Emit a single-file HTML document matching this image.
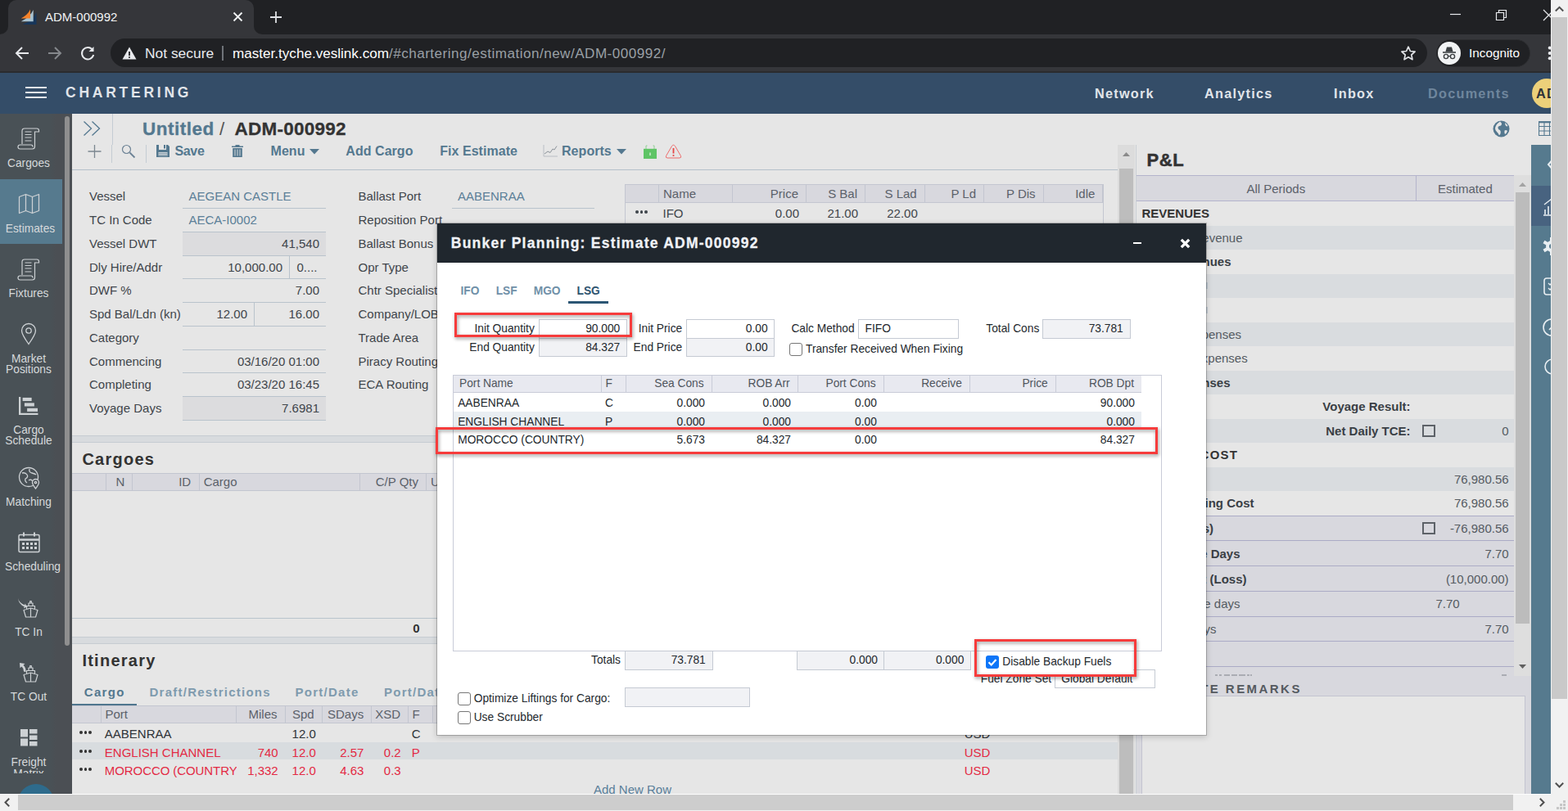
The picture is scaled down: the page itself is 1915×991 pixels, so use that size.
<!DOCTYPE html>
<html lang="en"><head><meta charset="utf-8"><title>ADM-000992</title>
<style>
html,body{margin:0;padding:0}
body{width:1915px;height:991px;overflow:hidden;position:relative;background:#e6e6e6;font-family:"Liberation Sans",sans-serif;}
body div,body svg{position:absolute}
.t{white-space:nowrap}
</style></head><body>
<div style="left:0px;top:0px;width:1894px;height:42px;background:#202124;"></div>
<div style="left:10px;top:0;width:300px;height:42px;background:#35363a;border-radius:10px 10px 0 0"></div>
<div style="left:0;top:32px;width:10px;height:10px;background:#35363a"></div><div style="left:0;top:22px;width:10px;height:20px;background:#202124;border-radius:0 0 10px 0"></div>
<div style="left:310px;top:32px;width:10px;height:10px;background:#35363a"></div><div style="left:310px;top:22px;width:10px;height:20px;background:#202124;border-radius:0 0 0 10px"></div>
<svg style="left:25px;top:11px;" width="20" height="20" viewBox="0 0 20 20"><path d="M2.500 19h17v-15q-4 10-17 15z" fill="#17365a"/><path d="M0.700 15.300h15v-14.300q-4 9-15 14.300z" fill="#a9c2cf"/><path d="M0.700 11.500h11.300v-11q-3 6.500-11.300 11z" fill="#f5822a"/></svg>
<div class="t" style="top:12px;font-size:15px;line-height:18px;color:#f1f3f4;left:55px;">ADM-000992</div>
<svg style="left:284px;top:14px;" width="13" height="13" viewBox="0 0 13 13"><path d="M1.5 1.5l10 10M11.5 1.5l-10 10" stroke="#f1f3f4" stroke-width="1.8" fill="none"/></svg>
<svg style="left:329px;top:13px;" width="16" height="16" viewBox="0 0 16 16"><path d="M8 1v14M1 8h14" stroke="#dfe1e5" stroke-width="1.8" fill="none"/></svg>
<svg style="left:1771px;top:16px;" width="14" height="3" viewBox="0 0 14 3"><path d="M0 1.5h13" stroke="#e8eaed" stroke-width="1.2"/></svg>
<svg style="left:1826px;top:11px;" width="15" height="15" viewBox="0 0 15 15"><path d="M1.5 4.5h9v9h-9zM4.5 4.5v-3h9v9h-3" stroke="#e8eaed" stroke-width="1.2" fill="none"/></svg>
<svg style="left:1884px;top:11px;" width="15" height="15" viewBox="0 0 15 15"><path d="M1 1l13 13M14 1L1 14" stroke="#e8eaed" stroke-width="1.2" fill="none"/></svg>
<div style="left:0px;top:42px;width:1894px;height:46px;background:#35363a;"></div>
<div style="left:0px;top:87px;width:1894px;height:2px;background:#2a2b2e;"></div>
<svg style="left:17px;top:55px;" width="20" height="20" viewBox="0 0 20 20"><path d="M18 10H3.5M10 3l-7 7 7 7" stroke="#e8eaed" stroke-width="2" fill="none"/></svg>
<svg style="left:57px;top:55px;" width="20" height="20" viewBox="0 0 20 20"><path d="M2 10h14.5M10 3l7 7-7 7" stroke="#85888c" stroke-width="2" fill="none"/></svg>
<svg style="left:97px;top:55px;" width="20" height="20" viewBox="0 0 20 20"><path d="M16.2 6.2A7.2 7.2 0 1 0 17.2 12" stroke="#e8eaed" stroke-width="2" fill="none"/><path d="M17.5 2v6h-6z" fill="#e8eaed"/></svg>
<div style="left:135px;top:47px;width:1608px;height:35px;background:#202124;border-radius:18px"></div>
<svg style="left:149px;top:56px;" width="18" height="18" viewBox="0 0 18 18"><path d="M9 1.5L17.5 16.5h-17z" fill="#e8eaed"/><path d="M9 7v5" stroke="#202124" stroke-width="1.8"/><circle cx="9" cy="14" r="1" fill="#202124"/></svg>
<div class="t" style="top:55px;font-size:17.4px;line-height:21px;color:#e8eaed;left:177px;">Not secure</div>
<div style="left:271px;top:56px;width:2px;height:18px;background:#6f7378;"></div>
<div class="t" style="top:55px;font-size:17.1px;line-height:21px;color:#9aa0a6;left:284px;"><span style="color:#fff">master.tyche.veslink.com</span><span style="letter-spacing:.48px">/#chartering/estimation/new/ADM-000992/</span></div>
<svg style="left:1710px;top:55px;" width="20" height="20" viewBox="0 0 20 20"><path d="M10 2.2l2.4 5.3 5.7.6-4.3 3.9 1.2 5.7-5-2.9-5 2.9 1.2-5.7-4.3-3.9 5.7-.6z" stroke="#dfe1e5" stroke-width="1.7" fill="none" stroke-linejoin="round"/></svg>
<div style="left:1754px;top:48px;width:115px;height:34px;background:#202124;border-radius:17px;box-sizing:border-box;border:1px solid #2c2d30"></div>
<div style="left:1756px;top:51px;width:28px;height:28px;background:#f1f3f4;border-radius:14px"></div>
<svg style="left:1760px;top:56px;" width="20" height="18" viewBox="0 0 20 18"><path d="M5.5 7L7 1.5h6L14.5 7z" fill="#3c4043"/><path d="M2 8h16" stroke="#3c4043" stroke-width="1.6"/><circle cx="6" cy="13" r="2.6" stroke="#3c4043" stroke-width="1.4" fill="none"/><circle cx="14" cy="13" r="2.6" stroke="#3c4043" stroke-width="1.4" fill="none"/><path d="M8.6 12.6h2.8" stroke="#3c4043" stroke-width="1.2"/></svg>
<div class="t" style="top:56px;font-size:15.3px;line-height:18px;color:#fff;left:1794px;">Incognito</div>
<svg style="left:1888px;top:55px;" width="6" height="20" viewBox="0 0 6 20"><circle cx="4.700" cy="3.600" r="2" fill="#e8eaed"/><circle cx="4.700" cy="9.900" r="2" fill="#e8eaed"/><circle cx="4.700" cy="16.200" r="2" fill="#e8eaed"/></svg>
<div style="left:0px;top:89px;width:1894px;height:50px;background:#344d68;"></div>
<div style="left:31px;top:106px;width:26px;height:2px;background:#e4e8ec;"></div>
<div style="left:31px;top:112px;width:26px;height:2px;background:#e4e8ec;"></div>
<div style="left:31px;top:118px;width:26px;height:2px;background:#e4e8ec;"></div>
<div class="t" style="top:103px;font-size:17.5px;line-height:21px;color:#e1e5ea;font-weight:700;letter-spacing:3.75px;left:80px;">CHARTERING</div>
<div class="t" style="top:104px;font-size:16.25px;line-height:20px;color:#e1e5ea;font-weight:700;letter-spacing:1.25px;left:1337px;">Network</div>
<div class="t" style="top:104px;font-size:16.25px;line-height:20px;color:#e1e5ea;font-weight:700;letter-spacing:1.25px;left:1471px;">Analytics</div>
<div class="t" style="top:104px;font-size:16.25px;line-height:20px;color:#e1e5ea;font-weight:700;letter-spacing:1.25px;left:1629px;">Inbox</div>
<div class="t" style="top:104px;font-size:16.25px;line-height:20px;color:#6f869d;font-weight:700;letter-spacing:1.25px;left:1744px;">Documents</div>
<div style="left:1871px;top:96px;width:36px;height:36px;background:#ecd07a;border-radius:18px"></div>
<div class="t" style="top:104px;font-size:16.25px;line-height:20px;color:#2f3338;font-weight:700;letter-spacing:1.25px;left:1876px;">AD</div>
<div style="left:0px;top:139px;width:1894px;height:831px;background:#e6e6e6;"></div>
<div style="left:0px;top:139px;width:88px;height:831px;background:linear-gradient(90deg,#495156 0,#495156 62px,#4b4f54 68px);"></div>
<div style="left:0px;top:219px;width:76px;height:79px;background:#567a8e;"></div>
<div style="left:79px;top:142px;width:6px;height:647px;background:#8f8f8f;border-radius:3px"></div>
<svg style="left:21px;top:156px;" width="28" height="28" viewBox="0 0 28 28"><g fill="none" stroke="#cdd1d4" stroke-width="1.2"><path d="M6 20V4q0-3 3-3h15q2.5 0 2.500 2.500v1.500h-5v18q0 3-3 3h-15q-2.500 0-2.500-2.500 0-2.500 2.500-2.500h13.500q2 0 2 2.500"/><path d="M9.500 5h8M9.500 8.500h8M9.500 12h8M9.500 16h8" stroke-width="1"/></g></svg>
<div class="t" style="top:192px;font-size:13.75px;line-height:16px;color:#d6d9db;left:-465px;width:1000px;text-align:center;">Cargoes</div>
<svg style="left:22px;top:236px;" width="28" height="26" viewBox="0 0 28 26"><g fill="none" stroke="#cdd1d4" stroke-width="1.25" stroke-linejoin="round"><path d="M1.500 4.500l8-3 8 3 8-3v20l-8 3-8-3-8 3zM9.500 1.500v20M17.500 4.500v20"/></g></svg>
<div class="t" style="top:272px;font-size:13.75px;line-height:16px;color:#d6d9db;left:-463px;width:1000px;text-align:center;">Estimates</div>
<svg style="left:21px;top:316px;" width="28" height="28" viewBox="0 0 28 28"><g fill="none" stroke="#cdd1d4" stroke-width="1.2"><path d="M6 20V4q0-3 3-3h15q2.5 0 2.500 2.500v1.500h-5v18q0 3-3 3h-15q-2.500 0-2.500-2.500 0-2.500 2.500-2.500h13.500q2 0 2 2.500"/><path d="M9.500 5h8M9.500 8.500h8M9.500 12h8M9.500 16h8" stroke-width="1"/></g></svg>
<div class="t" style="top:351px;font-size:13.75px;line-height:16px;color:#d6d9db;left:-465px;width:1000px;text-align:center;">Fixtures</div>
<svg style="left:25px;top:394px;" width="20" height="28" viewBox="0 0 20 28"><g fill="none" stroke="#cdd1d4" stroke-width="1.3"><path d="M10 26.500C4 18 1.500 14 1.500 10a8.500 8.500 0 0 1 17 0c0 4-2.500 8-8.500 16.500z"/><circle cx="10" cy="10" r="3.200"/></g></svg>
<div class="t" style="top:431px;font-size:13.75px;line-height:16px;color:#d6d9db;left:-465px;width:1000px;text-align:center;">Market</div>
<div class="t" style="top:444px;font-size:13.75px;line-height:16px;color:#d6d9db;left:-465px;width:1000px;text-align:center;">Positions</div>
<svg style="left:23px;top:485px;" width="24" height="22" viewBox="0 0 24 22"><g fill="#cdd1d4" transform="scale(.92)"><path d="M0 0h2.500v21.500h23v2.500h-25.500z"/><rect x="5" y="1" width="12" height="4.500"/><rect x="7.500" y="8" width="13" height="4.500"/><rect x="11" y="15" width="14" height="4.500"/></g></svg>
<div class="t" style="top:518px;font-size:13.75px;line-height:16px;color:#d6d9db;left:-465px;width:1000px;text-align:center;">Cargo</div>
<div class="t" style="top:531px;font-size:13.75px;line-height:16px;color:#d6d9db;left:-465px;width:1000px;text-align:center;">Schedule</div>
<svg style="left:22px;top:570px;" width="28" height="28" viewBox="0 0 28 28"><g fill="none" stroke="#cdd1d4" stroke-width="1.300"><circle cx="13" cy="13" r="11.500"/><path d="M5 8q4-1 6 2t-2 5q-1 3 2 5M14 3q-1 4 3 5t5 2M13 17q3-2 5 1"/><path d="M21.500 27q-4-5-4-7.500a4 4 0 0 1 8 0q0 2.500-4 7.500z" fill="#4b5156"/><circle cx="21.500" cy="19.500" r="1.200"/></g></svg>
<div class="t" style="top:606px;font-size:13.75px;line-height:16px;color:#d6d9db;left:-465px;width:1000px;text-align:center;">Matching</div>
<svg style="left:22px;top:650px;" width="28" height="26" viewBox="0 0 28 26"><g fill="none" stroke="#cdd1d4" stroke-width="1.500"><rect x="1" y="3.500" width="25" height="21" rx="1.500"/><path d="M1 9.500h25" stroke-width="2.500"/><path d="M7 0.500v5M20 0.500v5" stroke-width="2"/></g><g fill="#cdd1d4"><rect x="5" y="13" width="3" height="3"/><rect x="10" y="13" width="3" height="3"/><rect x="15" y="13" width="3" height="3"/><rect x="20" y="13" width="3" height="3"/><rect x="5" y="18" width="3" height="3"/><rect x="10" y="18" width="3" height="3"/><rect x="15" y="18" width="3" height="3"/><rect x="20" y="18" width="3" height="3"/></g></svg>
<div class="t" style="top:685px;font-size:13.75px;line-height:16px;color:#d6d9db;left:-460px;width:1000px;text-align:center;">Scheduling</div>
<svg style="left:21px;top:730px;" width="28" height="28" viewBox="0 0 28 28"><g fill="none" stroke="#cdd1d4" stroke-width="1.200" stroke-linejoin="round"><path d="M1 1q1.500 6 8.500 8.500l-.3-2 3.500 3.800-4.800 2 .8-2q-6.500-2.500-7.700-10.300z" fill="#cdd1d4" stroke="none"/><path d="M8 15.500l8.500-2.500 8.500 2.500-2.500 8.500h-12zM16.500 13v11M11.500 14.500v-4h10v4M14 10.500v-3.500h5v3.500M15.700 7v-2.500h1.600v2.500"/></g></svg>
<div class="t" style="top:765px;font-size:13.75px;line-height:16px;color:#d6d9db;left:-465px;width:1000px;text-align:center;">TC In</div>
<svg style="left:21px;top:809px;" width="28" height="28" viewBox="0 0 28 28"><g fill="none" stroke="#cdd1d4" stroke-width="1.200" stroke-linejoin="round"><path d="M3 1l6.500 1-2 1.800q3.500 3.500 3 8.500l-2.500-.8q.3-3.500-2.500-6l-2 1.800z" fill="#cdd1d4" stroke="none"/><path d="M8 15.500l8.500-2.500 8.500 2.500-2.500 8.500h-12zM16.500 13v11M11.500 14.500v-4h10v4M14 10.500v-3.500h5v3.500M15.700 7v-2.500h1.600v2.500"/></g></svg>
<div class="t" style="top:844px;font-size:13.75px;line-height:16px;color:#d6d9db;left:-465px;width:1000px;text-align:center;">TC Out</div>
<svg style="left:25px;top:891px;" width="21" height="21" viewBox="0 0 21 21"><g fill="#cdd1d4"><rect x="0" y="0" width="9" height="9.500"/><rect x="0" y="11.500" width="9" height="9"/><rect x="11" y="0" width="9.500" height="5.500"/><rect x="11" y="7.500" width="9.500" height="5.500"/><rect x="11" y="15" width="9.500" height="5.500"/></g></svg>
<div class="t" style="top:924px;font-size:13.75px;line-height:16px;color:#d6d9db;left:-465px;width:1000px;text-align:center;">Freight</div>
<div style="left:0;top:938px;width:76px;height:7px;overflow:hidden"><div class="t" style="left:0;width:70px;text-align:center;top:0px;font-size:13.75px;line-height:16px;color:#d6d9db">Matrix</div></div>
<div style="left:0;top:950px;width:88px;height:20px;overflow:hidden"><div style="left:22px;top:8px;width:44px;height:44px;border-radius:22px;background:#2e6b8c"></div></div>
<svg style="left:101px;top:147px;" width="23" height="20" viewBox="0 0 23 20"><path d="M1.500 1.500l9 8.500-9 8.500M11.500 1.500l9 8.500-9 8.500" stroke="#54788f" stroke-width="1.300" fill="none"/></svg>
<div style="left:137px;top:139px;width:1px;height:38px;background:#c5ccd3;"></div>
<div class="t" style="top:144px;font-size:22.5px;line-height:27px;color:#54788f;font-weight:700;letter-spacing:0.5px;left:174px;-webkit-text-stroke:.3px #54788f;">Untitled</div>
<div class="t" style="top:144px;font-size:22.5px;line-height:27px;color:#555;left:268px;">/</div>
<div class="t" style="top:144px;font-size:22.5px;line-height:27px;color:#333;font-weight:700;letter-spacing:0.25px;left:286.5px;-webkit-text-stroke:.3px #333;">ADM-000992</div>
<svg style="left:107px;top:177px;" width="17" height="16" viewBox="0 0 17 16"><path d="M8.500 0v16M0.500 8h16" stroke="#7b8790" stroke-width="1.300" fill="none"/></svg>
<div style="left:136px;top:177px;width:1px;height:22px;background:#c5ccd3;"></div>
<div style="left:178px;top:177px;width:1px;height:22px;background:#c5ccd3;"></div>
<svg style="left:148px;top:176px;" width="18" height="18" viewBox="0 0 18 18"><circle cx="6.500" cy="6.500" r="5" stroke="#6c8295" stroke-width="1.200" fill="none"/><path d="M10.500 10.500l6 6" stroke="#6c8295" stroke-width="1.800"/></svg>
<svg style="left:191px;top:177px;" width="16" height="15" viewBox="0 0 16 15"><path d="M0 0h3v6h9v-6h2l2 2v13h-16z" fill="#54788f"/><rect x="9" y="0" width="2" height="4.500" fill="#54788f"/><rect x="2.500" y="9" width="11" height="4.500" fill="#d0d6db"/><path d="M2.500 10.500h11M2.500 12.500h11" stroke="#54788f" stroke-width=".6"/></svg>
<div class="t" style="top:175px;font-size:16px;line-height:19px;color:#54788f;font-weight:700;letter-spacing:-0.35px;left:213.5px;">Save</div>
<svg style="left:283px;top:177px;" width="14" height="15" viewBox="0 0 14 15"><path d="M0 1.500h14v1.500h-14zM4.500 0h5v1.500h-5z" fill="#54788f"/><path d="M1.200 4h11.600v11h-11.600z" fill="#54788f"/><path d="M4 5.500v8M7 5.500v8M10 5.500v8" stroke="#e6e6e6" stroke-width=".9"/></svg>
<div class="t" style="top:175px;font-size:16px;line-height:19px;color:#54788f;font-weight:700;letter-spacing:0.05px;left:330.5px;">Menu</div>
<svg style="left:378px;top:182px;" width="12" height="7" viewBox="0 0 12 7"><path d="M0 0h12l-6 6.500z" fill="#54788f"/></svg>
<div class="t" style="top:175px;font-size:16px;line-height:19px;color:#54788f;font-weight:700;letter-spacing:0.05px;left:422.3px;">Add Cargo</div>
<div class="t" style="top:175px;font-size:16px;line-height:19px;color:#54788f;font-weight:700;letter-spacing:0.05px;left:537.2px;">Fix Estimate</div>
<svg style="left:663px;top:177px;" width="18" height="15" viewBox="0 0 18 15"><path d="M1 0v14h17" stroke="#b9bec4" stroke-width="1" fill="none"/><path d="M2 11l4-3 3 1.500 3-4.500 2 1 3-4.500" stroke="#8b9299" stroke-width="1" fill="none"/></svg>
<div class="t" style="top:175px;font-size:16px;line-height:19px;color:#54788f;font-weight:700;letter-spacing:0.05px;left:686px;">Reports</div>
<svg style="left:753px;top:182px;" width="12" height="7" viewBox="0 0 12 7"><path d="M0 0h12l-6 6.500z" fill="#54788f"/></svg>
<svg style="left:786px;top:177px;" width="16" height="17" viewBox="0 0 16 17"><path d="M3 5V1M13 5V1M3 1h1.500M11.500 1H13" stroke="#8ed093" stroke-width="1" fill="none"/><rect x="0" y="4.800" width="16" height="12.200" fill="#5fc466"/><rect x="7.300" y="9.500" width="1.400" height="3.500" fill="#d8f0da"/></svg>
<svg style="left:812px;top:176px;" width="21" height="18" viewBox="0 0 21 18"><path d="M10.500 1.200q1.200 0 1.900 1.200l7 12q1.200 2.400-1.500 2.600h-14.800q-2.700-.2-1.500-2.600l7-12q.7-1.200 1.900-1.200z" stroke="#ee6a6a" stroke-width="1" fill="none"/><path d="M10.500 5v6.500" stroke="#e54848" stroke-width="1.800"/><circle cx="10.500" cy="14" r="1.100" fill="#e54848"/></svg>
<div style="left:88px;top:207px;width:1277px;height:1px;background:#b4c0ca;"></div>
<svg style="left:1823px;top:147px;" width="21" height="21" viewBox="0 0 21 21"><circle cx="10.500" cy="10.500" r="10" fill="#54788f"/><path d="M9 1.500q2.500 1.500 2 3.500t-3 2q-2 .5-1.500 2.500t2.500 2.500q1.500 2 .5 4.500l-1.500 2q-1-3-3-4.500t-2-4.500q1-5 6-8zM15 3q2.500 1.500 3.500 4l-1.500 .5q-2-1-2-4.500zM14.500 12.500q2-1 3.500 .5-1 3-3 4-1-2-.5-4.500z" fill="#e6e6e6"/></svg>
<svg style="left:1879px;top:148px;" width="16" height="18" viewBox="0 0 16 18"><path d="M0.500 1h19v16.500h-19zM0.500 6.500h19M0.500 12h19M7 1v16M13.500 1v16" stroke="#54788f" stroke-width="1.100" fill="none"/><path d="M0 1.200h20" stroke="#54788f" stroke-width="2.200"/></svg>
<div class="t" style="top:231px;font-size:15px;line-height:18px;color:#3f454b;left:109px;">Vessel</div>
<div style="left:223px;top:254px;width:175px;height:1px;background:#b9c3cc;"></div>
<div class="t" style="top:260px;font-size:15px;line-height:18px;color:#3f454b;left:109px;">TC In Code</div>
<div style="left:223px;top:283px;width:175px;height:1px;background:#b9c3cc;"></div>
<div style="left:223px;top:284px;width:175px;height:28px;background:#dcdcde;"></div>
<div class="t" style="top:289px;font-size:15px;line-height:18px;color:#3f454b;left:109px;">Vessel DWT</div>
<div style="left:223px;top:312px;width:175px;height:1px;background:#b9c3cc;"></div>
<div class="t" style="top:318px;font-size:15px;line-height:18px;color:#3f454b;left:109px;">Dly Hire/Addr</div>
<div style="left:223px;top:340px;width:175px;height:1px;background:#b9c3cc;"></div>
<div class="t" style="top:346px;font-size:15px;line-height:18px;color:#3f454b;left:109px;">DWF %</div>
<div style="left:223px;top:369px;width:175px;height:1px;background:#b9c3cc;"></div>
<div class="t" style="top:375px;font-size:15px;line-height:18px;color:#3f454b;left:109px;">Spd Bal/Ldn (kn)</div>
<div style="left:223px;top:398px;width:175px;height:1px;background:#b9c3cc;"></div>
<div class="t" style="top:404px;font-size:15px;line-height:18px;color:#3f454b;left:109px;">Category</div>
<div style="left:223px;top:427px;width:175px;height:1px;background:#b9c3cc;"></div>
<div class="t" style="top:433px;font-size:15px;line-height:18px;color:#3f454b;left:109px;">Commencing</div>
<div style="left:223px;top:455px;width:175px;height:1px;background:#b9c3cc;"></div>
<div class="t" style="top:461px;font-size:15px;line-height:18px;color:#3f454b;left:109px;">Completing</div>
<div style="left:223px;top:484px;width:175px;height:1px;background:#b9c3cc;"></div>
<div style="left:223px;top:485px;width:175px;height:28px;background:#dcdcde;"></div>
<div class="t" style="top:490px;font-size:15px;line-height:18px;color:#3f454b;left:109px;">Voyage Days</div>
<div style="left:223px;top:513px;width:175px;height:1px;background:#b9c3cc;"></div>
<div class="t" style="top:231px;font-size:15px;line-height:18px;color:#5b7f98;left:230.5px;">AEGEAN CASTLE</div>
<div class="t" style="top:260px;font-size:15px;line-height:18px;color:#5b7f98;left:230.5px;">AECA-I0002</div>
<div class="t" style="top:289px;font-size:15px;line-height:18px;color:#3f454b;right:1525px;">41,540</div>
<div class="t" style="top:318px;font-size:15px;line-height:18px;color:#3f454b;right:1570px;">10,000.00</div>
<div class="t" style="top:318px;font-size:15px;line-height:18px;color:#3f454b;left:362.5px;">0....</div>
<div class="t" style="top:346px;font-size:15px;line-height:18px;color:#3f454b;right:1525px;">7.00</div>
<div class="t" style="top:375px;font-size:15px;line-height:18px;color:#3f454b;right:1613px;">12.00</div>
<div class="t" style="top:375px;font-size:15px;line-height:18px;color:#3f454b;right:1525px;">16.00</div>
<div class="t" style="top:433px;font-size:15px;line-height:18px;color:#3f454b;right:1525px;">03/16/20 01:00</div>
<div class="t" style="top:461px;font-size:15px;line-height:18px;color:#3f454b;right:1525px;">03/23/20 16:45</div>
<div class="t" style="top:490px;font-size:15px;line-height:18px;color:#3f454b;right:1525px;">7.6981</div>
<div style="left:353px;top:313px;width:1px;height:27px;background:#b9c3cc;"></div>
<div style="left:310px;top:370px;width:1px;height:28px;background:#b9c3cc;"></div>
<div class="t" style="top:231px;font-size:15px;line-height:18px;color:#3f454b;left:437.5px;">Ballast Port</div>
<div class="t" style="top:260px;font-size:15px;line-height:18px;color:#3f454b;left:437.5px;">Reposition Port</div>
<div class="t" style="top:289px;font-size:15px;line-height:18px;color:#3f454b;left:437.5px;">Ballast Bonus</div>
<div class="t" style="top:318px;font-size:15px;line-height:18px;color:#3f454b;left:437.5px;">Opr Type</div>
<div class="t" style="top:346px;font-size:15px;line-height:18px;color:#3f454b;left:437.5px;">Chtr Specialist</div>
<div class="t" style="top:375px;font-size:15px;line-height:18px;color:#3f454b;left:437.5px;">Company/LOB</div>
<div class="t" style="top:404px;font-size:15px;line-height:18px;color:#3f454b;left:437.5px;">Trade Area</div>
<div class="t" style="top:433px;font-size:15px;line-height:18px;color:#3f454b;left:437.5px;">Piracy Routing</div>
<div class="t" style="top:461px;font-size:15px;line-height:18px;color:#3f454b;left:437.5px;">ECA Routing</div>
<div class="t" style="top:231px;font-size:15px;line-height:18px;color:#5b7f98;left:559px;">AABENRAA</div>
<div style="left:552px;top:254px;width:174px;height:1px;background:#b9c3cc;"></div>
<div style="left:763px;top:225px;width:584px;height:23px;background:#d8d8de;box-sizing:border-box;border:1px solid #c3c6d0;"></div>
<div style="left:804px;top:226px;width:1px;height:21px;background:#c3c6d0;"></div>
<div style="left:894px;top:226px;width:1px;height:21px;background:#c3c6d0;"></div>
<div style="left:984px;top:226px;width:1px;height:21px;background:#c3c6d0;"></div>
<div style="left:1056px;top:226px;width:1px;height:21px;background:#c3c6d0;"></div>
<div style="left:1129px;top:226px;width:1px;height:21px;background:#c3c6d0;"></div>
<div style="left:1201px;top:226px;width:1px;height:21px;background:#c3c6d0;"></div>
<div style="left:1274px;top:226px;width:1px;height:21px;background:#c3c6d0;"></div>
<div style="left:763px;top:247px;width:1px;height:30px;background:#c3c6d0;"></div>
<div style="left:1347px;top:225px;width:1px;height:52px;background:#c3c6d0;"></div>
<div class="t" style="top:228px;font-size:15px;line-height:18px;color:#5b616a;left:810px;">Name</div>
<div class="t" style="top:228px;font-size:15px;line-height:18px;color:#5b616a;right:940px;">Price</div>
<div class="t" style="top:228px;font-size:15px;line-height:18px;color:#5b616a;right:868px;">S Bal</div>
<div class="t" style="top:228px;font-size:15px;line-height:18px;color:#5b616a;right:795.3px;">S Lad</div>
<div class="t" style="top:228px;font-size:15px;line-height:18px;color:#5b616a;right:723px;">P Ld</div>
<div class="t" style="top:228px;font-size:15px;line-height:18px;color:#5b616a;right:650.4px;">P Dis</div>
<div class="t" style="top:228px;font-size:15px;line-height:18px;color:#5b616a;right:577.7px;">Idle</div>
<div class="t" style="top:252px;font-size:15px;line-height:18px;color:#3f454b;left:809.5px;">IFO</div>
<div class="t" style="top:252px;font-size:15px;line-height:18px;color:#3f454b;right:939px;">0.00</div>
<div class="t" style="top:252px;font-size:15px;line-height:18px;color:#3f454b;right:867px;">21.00</div>
<div class="t" style="top:252px;font-size:15px;line-height:18px;color:#3f454b;right:794.2px;">22.00</div>
<div style="left:776px;top:257px;width:3.6px;height:3.6px;border-radius:2px;background:#3f454b"></div><div style="left:781.6px;top:257px;width:3.6px;height:3.6px;border-radius:2px;background:#3f454b"></div><div style="left:787.2px;top:257px;width:3.6px;height:3.6px;border-radius:2px;background:#3f454b"></div>
<div style="left:88px;top:532px;width:1277px;height:9px;background:#d8dbde;box-sizing:border-box;border-top:1px solid #c6ccd2;border-bottom:1px solid #c6ccd2;"></div>
<div class="t" style="top:549px;font-size:20px;line-height:24px;color:#333;font-weight:700;letter-spacing:1.25px;left:100.4px;">Cargoes</div>
<div style="left:88px;top:578px;width:1277px;height:22px;background:#d8d8de;box-sizing:border-box;border-top:1px solid #c3c6d0;border-bottom:1px solid #c3c6d0;"></div>
<div style="left:129px;top:579px;width:1px;height:20px;background:#c3c6d0;"></div>
<div style="left:161px;top:579px;width:1px;height:20px;background:#c3c6d0;"></div>
<div style="left:243px;top:579px;width:1px;height:20px;background:#c3c6d0;"></div>
<div style="left:439px;top:579px;width:1px;height:20px;background:#c3c6d0;"></div>
<div style="left:520px;top:579px;width:1px;height:20px;background:#c3c6d0;"></div>
<div class="t" style="top:580px;font-size:15px;line-height:18px;color:#5b616a;left:-353px;width:1000px;text-align:center;">N</div>
<div class="t" style="top:580px;font-size:15px;line-height:18px;color:#5b616a;right:1681.8px;">ID</div>
<div class="t" style="top:580px;font-size:15px;line-height:18px;color:#5b616a;left:248.7px;">Cargo</div>
<div class="t" style="top:580px;font-size:15px;line-height:18px;color:#5b616a;right:1404px;">C/P Qty</div>
<div class="t" style="top:580px;font-size:15px;line-height:18px;color:#5b616a;left:526px;">U</div>
<div style="left:88px;top:755px;width:1277px;height:1px;background:#b8c4cc;"></div>
<div class="t" style="top:759px;font-size:15px;line-height:18px;color:#333;font-weight:700;right:1402.5px;">0</div>
<div style="left:88px;top:778px;width:1277px;height:9px;background:#d8dbde;box-sizing:border-box;border-top:1px solid #c6ccd2;border-bottom:1px solid #c6ccd2;"></div>
<div class="t" style="top:795px;font-size:20px;line-height:24px;color:#333;font-weight:700;letter-spacing:1.25px;left:100.4px;">Itinerary</div>
<div class="t" style="top:837px;font-size:15px;line-height:18px;color:#54788f;font-weight:700;letter-spacing:1.3px;left:102.8px;">Cargo</div>
<div class="t" style="top:837px;font-size:15px;line-height:18px;color:#7f9bae;font-weight:700;letter-spacing:1.25px;left:182.5px;">Draft/Restrictions</div>
<div class="t" style="top:837px;font-size:15px;line-height:18px;color:#7f9bae;font-weight:700;letter-spacing:1.25px;left:360.6px;">Port/Date</div>
<div class="t" style="top:837px;font-size:15px;line-height:18px;color:#7f9bae;font-weight:700;letter-spacing:1.25px;left:469px;">Port/Date</div>
<div style="left:88px;top:862px;width:1277px;height:22px;background:#d8d8de;box-sizing:border-box;border-top:1px solid #c3c6d0;border-bottom:1px solid #c3c6d0;"></div>
<div style="left:88px;top:860px;width:79px;height:2px;background:#4f768e;"></div>
<div style="left:123px;top:863px;width:1px;height:20px;background:#c3c6d0;"></div>
<div style="left:288px;top:863px;width:1px;height:20px;background:#c3c6d0;"></div>
<div style="left:348px;top:863px;width:1px;height:20px;background:#c3c6d0;"></div>
<div style="left:393px;top:863px;width:1px;height:20px;background:#c3c6d0;"></div>
<div style="left:453px;top:863px;width:1px;height:20px;background:#c3c6d0;"></div>
<div style="left:498px;top:863px;width:1px;height:20px;background:#c3c6d0;"></div>
<div style="left:528px;top:863px;width:1px;height:20px;background:#c3c6d0;"></div>
<div class="t" style="top:864px;font-size:15px;line-height:18px;color:#5b616a;left:128.5px;">Port</div>
<div class="t" style="top:864px;font-size:15px;line-height:18px;color:#5b616a;right:1576.5px;">Miles</div>
<div class="t" style="top:864px;font-size:15px;line-height:18px;color:#5b616a;left:357px;">Spd</div>
<div class="t" style="top:864px;font-size:15px;line-height:18px;color:#5b616a;left:400px;">SDays</div>
<div class="t" style="top:864px;font-size:15px;line-height:18px;color:#5b616a;left:458.2px;">XSD</div>
<div class="t" style="top:864px;font-size:15px;line-height:18px;color:#5b616a;left:503.5px;">F</div>
<div style="left:88px;top:907px;width:1277px;height:21px;background:#d8dcdf;"></div>
<div style="left:97px;top:893px;width:3.6px;height:3.6px;border-radius:2px;background:#333"></div><div style="left:102.6px;top:893px;width:3.6px;height:3.6px;border-radius:2px;background:#333"></div><div style="left:108.2px;top:893px;width:3.6px;height:3.6px;border-radius:2px;background:#333"></div>
<div style="left:0;top:0;width:288.500px;height:970px;overflow:hidden">
<div class="t" style="top:888px;font-size:15px;line-height:18px;color:#2e3338;left:127.8px;">AABENRAA</div>
</div>
<div class="t" style="top:888px;font-size:15px;line-height:18px;color:#2e3338;left:356.6px;">12.0</div>
<div class="t" style="top:888px;font-size:15px;line-height:18px;color:#2e3338;left:502.8px;">C</div>
<div class="t" style="top:888px;font-size:15px;line-height:18px;color:#2e3338;left:1177.7px;">USD</div>
<div style="left:97px;top:916px;width:3.6px;height:3.6px;border-radius:2px;background:#333"></div><div style="left:102.6px;top:916px;width:3.6px;height:3.6px;border-radius:2px;background:#333"></div><div style="left:108.2px;top:916px;width:3.6px;height:3.6px;border-radius:2px;background:#333"></div>
<div style="left:0;top:0;width:288.500px;height:970px;overflow:hidden">
<div class="t" style="top:911px;font-size:15px;line-height:18px;color:#e32a44;left:127.8px;">ENGLISH CHANNEL</div>
</div>
<div class="t" style="top:911px;font-size:15px;line-height:18px;color:#e32a44;right:1575.3px;">740</div>
<div class="t" style="top:911px;font-size:15px;line-height:18px;color:#e32a44;left:356.6px;">12.0</div>
<div class="t" style="top:911px;font-size:15px;line-height:18px;color:#e32a44;right:1470.6px;">2.57</div>
<div class="t" style="top:911px;font-size:15px;line-height:18px;color:#e32a44;right:1425.3px;">0.2</div>
<div class="t" style="top:911px;font-size:15px;line-height:18px;color:#e32a44;left:502.8px;">P</div>
<div class="t" style="top:911px;font-size:15px;line-height:18px;color:#e32a44;left:1177.7px;">USD</div>
<div style="left:97px;top:938px;width:3.6px;height:3.6px;border-radius:2px;background:#333"></div><div style="left:102.6px;top:938px;width:3.6px;height:3.6px;border-radius:2px;background:#333"></div><div style="left:108.2px;top:938px;width:3.6px;height:3.6px;border-radius:2px;background:#333"></div>
<div style="left:0;top:0;width:288.500px;height:970px;overflow:hidden">
<div class="t" style="top:933px;font-size:15px;line-height:18px;color:#e32a44;letter-spacing:-0.08px;left:127.8px;">MOROCCO (COUNTRY</div>
</div>
<div class="t" style="top:933px;font-size:15px;line-height:18px;color:#e32a44;right:1575.3px;">1,332</div>
<div class="t" style="top:933px;font-size:15px;line-height:18px;color:#e32a44;left:356.6px;">12.0</div>
<div class="t" style="top:933px;font-size:15px;line-height:18px;color:#e32a44;right:1470.6px;">4.63</div>
<div class="t" style="top:933px;font-size:15px;line-height:18px;color:#e32a44;right:1425.3px;">0.3</div>
<div class="t" style="top:933px;font-size:15px;line-height:18px;color:#e32a44;left:1177.7px;">USD</div>
<div class="t" style="top:956px;font-size:15px;line-height:18px;color:#5a7f9a;left:272.5px;width:1000px;text-align:center;">Add New Row</div>
<div style="left:1365px;top:177px;width:21px;height:793px;background:#dcdcdc;"></div>
<svg style="left:1371px;top:186px;" width="9" height="5" viewBox="0 0 9 5"><path d="M0 5l4.500-5 4.500 5z" fill="#8a8a8a"/></svg>
<div style="left:1367px;top:206px;width:17px;height:764px;background:#bdbdbd;"></div>
<div style="left:1387px;top:177px;width:1px;height:793px;background:#c9ced4;"></div>
<div class="t" style="top:183px;font-size:22px;line-height:26px;color:#333;font-weight:700;letter-spacing:0.6px;left:1400.5px;-webkit-text-stroke:0.5px #333;">P&amp;L</div>
<div style="left:1388px;top:214px;width:461px;height:32px;background:#d8d8de;box-sizing:border-box;border-top:1px solid #b4b4cc;border-bottom:1px solid #b4b4cc"></div>
<div style="left:1729px;top:215px;width:1px;height:30px;background:#b4b4cc;"></div>
<div class="t" style="top:222px;font-size:15px;line-height:18px;color:#5b616a;left:1058.3px;width:1000px;text-align:center;">All Periods</div>
<div class="t" style="top:222px;font-size:15px;line-height:18px;color:#5b616a;left:1289.4px;width:1000px;text-align:center;">Estimated</div>
<div style="left:1388px;top:276px;width:461px;height:29px;background:#d9dcdf;"></div>
<div style="left:1388px;top:335px;width:461px;height:29px;background:#d9dcdf;"></div>
<div style="left:1388px;top:394px;width:461px;height:29px;background:#d9dcdf;"></div>
<div style="left:1388px;top:453px;width:461px;height:29px;background:#d9dcdf;"></div>
<div style="left:1388px;top:512px;width:461px;height:29px;background:#d9dcdf;"></div>
<div style="left:1388px;top:571px;width:461px;height:29px;background:#d9dcdf;"></div>
<div class="t" style="top:252px;font-size:15px;line-height:18px;color:#333;font-weight:700;left:1394.5px;">REVENUES</div>
<div class="t" style="top:282px;font-size:15px;line-height:18px;color:#555b62;right:397.5px;">Revenue</div>
<div class="t" style="top:311px;font-size:15px;line-height:18px;color:#3a3f45;font-weight:700;right:411.5px;">enues</div>
<div style="left:1473px;top:345px;width:2px;height:8px;background:#8fa6b8;opacity:.4;"></div>
<div style="left:1473px;top:375px;width:2px;height:8px;background:#8fa6b8;opacity:.4;"></div>
<div class="t" style="top:400px;font-size:15px;line-height:18px;color:#555b62;right:399px;">xpenses</div>
<div class="t" style="top:429px;font-size:15px;line-height:18px;color:#555b62;right:391.3px;">Expenses</div>
<div class="t" style="top:459px;font-size:15px;line-height:18px;color:#3a3f45;font-weight:700;right:412.5px;">enses</div>
<div class="t" style="top:488px;font-size:15px;line-height:18px;color:#3a3f45;font-weight:700;right:192.4px;">Voyage Result:</div>
<div class="t" style="top:518px;font-size:15px;line-height:18px;color:#3a3f45;font-weight:700;right:192.4px;">Net Daily TCE:</div>
<div style="left:1737px;top:519px;width:16px;height:15px;box-sizing:border-box;border:2px solid #5d6268"></div>
<div class="t" style="top:518px;font-size:15px;line-height:18px;color:#555b62;right:72.4px;">0</div>
<div class="t" style="top:547px;font-size:15px;line-height:18px;color:#333;font-weight:700;letter-spacing:1.25px;right:402.75px;">COST</div>
<div class="t" style="top:577px;font-size:15px;line-height:18px;color:#555b62;right:72.4px;">76,980.56</div>
<div class="t" style="top:606px;font-size:15px;line-height:18px;color:#3a3f45;font-weight:700;right:383.5px;">ning Cost</div>
<div class="t" style="top:606px;font-size:15px;line-height:18px;color:#555b62;right:72.4px;">76,980.56</div>
<div style="left:1388px;top:630px;width:461px;height:196px;background:#d8d8de;"></div>
<div style="left:1388px;top:630px;width:461px;height:1px;background:#ababc6;"></div>
<div style="left:1388px;top:660px;width:461px;height:1px;background:#ababc6;"></div>
<div style="left:1388px;top:691px;width:461px;height:1px;background:#ababc6;"></div>
<div style="left:1388px;top:722px;width:461px;height:1px;background:#ababc6;"></div>
<div style="left:1388px;top:753px;width:461px;height:1px;background:#ababc6;"></div>
<div style="left:1388px;top:783px;width:461px;height:1px;background:#ababc6;"></div>
<div style="left:1388px;top:814px;width:461px;height:1px;background:#ababc6;"></div>
<div class="t" style="top:637px;font-size:15px;line-height:18px;color:#3a3f45;font-weight:700;right:433px;">ss)</div>
<div style="left:1737px;top:638px;width:16px;height:15px;box-sizing:border-box;border:2px solid #5d6268"></div>
<div class="t" style="top:637px;font-size:15px;line-height:18px;color:#555b62;right:72.4px;">-76,980.56</div>
<div class="t" style="top:668px;font-size:15px;line-height:18px;color:#3a3f45;font-weight:700;right:400.5px;">e Days</div>
<div class="t" style="top:668px;font-size:15px;line-height:18px;color:#555b62;right:72.4px;">7.70</div>
<div class="t" style="top:699px;font-size:15px;line-height:18px;color:#3a3f45;font-weight:700;right:392.5px;">t (Loss)</div>
<div class="t" style="top:699px;font-size:15px;line-height:18px;color:#555b62;right:72.4px;">(10,000.00)</div>
<div class="t" style="top:729px;font-size:15px;line-height:18px;color:#555b62;right:400.5px;">e days</div>
<div class="t" style="top:729px;font-size:15px;line-height:18px;color:#555b62;right:132.4px;">7.70</div>
<div class="t" style="top:760px;font-size:15px;line-height:18px;color:#555b62;right:429.5px;">ays</div>
<div class="t" style="top:760px;font-size:15px;line-height:18px;color:#555b62;right:72.4px;">7.70</div>
<div style="left:1484px;top:824px;width:3px;height:2px;background:#85888f;opacity:.55;"></div>
<div style="left:1489px;top:824px;width:3px;height:2px;background:#85888f;opacity:.55;"></div>
<div style="left:1495px;top:824px;width:7px;height:2px;background:#85888f;opacity:.55;"></div>
<div style="left:1504px;top:824px;width:7px;height:2px;background:#85888f;opacity:.55;"></div>
<div style="left:1513px;top:824px;width:8px;height:2px;background:#85888f;opacity:.55;"></div>
<div style="left:1523px;top:824px;width:3px;height:2px;background:#85888f;opacity:.55;"></div>
<div style="left:1527px;top:824px;width:2px;height:2px;background:#85888f;opacity:.55;"></div>
<div style="left:1834px;top:824px;width:6px;height:2px;background:#85888f;opacity:.55;"></div>
<div style="left:1849px;top:214px;width:21px;height:612px;background:#dedede;"></div>
<svg style="left:1855px;top:223px;" width="9" height="5" viewBox="0 0 9 5"><path d="M0 5l4.500-5 4.500 5z" fill="#a3a3a3"/></svg>
<div style="left:1851px;top:235px;width:17px;height:527px;background:#bcbcbc;"></div>
<svg style="left:1855px;top:812px;" width="9" height="5" viewBox="0 0 9 5"><path d="M0 0l4.500 5 4.500-5z" fill="#606060"/></svg>
<div style="left:1388px;top:826px;width:482px;height:144px;background:#d8d8de;"></div>
<div class="t" style="top:833px;font-size:15px;line-height:18px;color:#555a60;font-weight:700;letter-spacing:2.45px;right:325.15px;">ATE REMARKS</div>
<div style="left:1394px;top:850px;width:469px;height:125px;background:#e6e6e6;box-sizing:border-box;border:1px solid #c3c4d0"></div>
<div style="left:1870px;top:177px;width:24px;height:793px;background:#567a8e;"></div>
<div style="left:1870px;top:227px;width:24px;height:49px;background:#486380;"></div>
<svg style="left:1888.5px;top:191px;" width="10" height="20" viewBox="0 0 10 20"><path d="M9 2l-7 8 7 8" stroke="#e8eef2" stroke-width="2" fill="none"/></svg>
<svg style="left:1884px;top:241px;" width="12" height="24" viewBox="0 0 12 24"><path d="M1 22h11M3 21v-6M7 21v-10M11 21v-8" stroke="#e8eef2" stroke-width="1.600" fill="none"/><path d="M2 9l9-7" stroke="#e8eef2" stroke-width="1.400" fill="none"/></svg>
<svg style="left:1884px;top:290px;" width="12" height="22" viewBox="0 0 12 22"><circle cx="11" cy="11" r="7" fill="#e8eef2"/><path d="M11 0v22M1.500 5.500l19 11M1.500 16.500l19-11" stroke="#e8eef2" stroke-width="4"/><circle cx="11" cy="11" r="3" fill="#567a8e"/></svg>
<svg style="left:1884.5px;top:338px;" width="12" height="24" viewBox="0 0 12 24"><rect x="1" y="2" width="16" height="20" rx="3" stroke="#e8eef2" stroke-width="1.600" fill="none"/><path d="M6 8l2 2 3-3M6 14l2 2 3-3" stroke="#e8eef2" stroke-width="1.300" fill="none"/></svg>
<svg style="left:1883px;top:388px;" width="13" height="24" viewBox="0 0 13 24"><circle cx="12" cy="12" r="10" stroke="#e8eef2" stroke-width="1.600" fill="none"/><path d="M12 6v6l-3 3" stroke="#e8eef2" stroke-width="1.600" fill="none"/></svg>
<svg style="left:1884px;top:436px;" width="13" height="24" viewBox="0 0 13 24"><circle cx="12" cy="12" r="9" stroke="#e8eef2" stroke-width="1.600" fill="none"/></svg>
<div style="left:534px;top:273px;width:939px;height:625px;background:#fff;box-shadow:0 0 0 1px rgba(0,0,0,.2),0 2px 7px 1px rgba(0,0,0,.17)"></div>
<div style="left:534px;top:273px;width:939px;height:48px;background:#20272e;"></div>
<div class="t" style="top:287px;font-size:17.5px;line-height:21px;color:#f0f2f6;font-weight:700;letter-spacing:1.25px;left:550.8px;-webkit-text-stroke:.3px #f0f2f6;">Bunker Planning: Estimate ADM-000992</div>
<div style="left:1384px;top:295.5px;width:10px;height:2.6px;background:#fff;"></div>
<svg style="left:1441px;top:291px;" width="13" height="13" viewBox="0 0 13 13"><path d="M1.800 1.800l9.400 9.400M11.200 1.800l-9.400 9.400" stroke="#fff" stroke-width="3.300" fill="none"/></svg>
<div class="t" style="top:348px;font-size:13.75px;line-height:16px;color:#7090a8;font-weight:700;left:562.5px;">IFO</div>
<div class="t" style="top:348px;font-size:13.75px;line-height:16px;color:#7090a8;font-weight:700;left:605.7px;">LSF</div>
<div class="t" style="top:348px;font-size:13.75px;line-height:16px;color:#7090a8;font-weight:700;left:651.7px;">MGO</div>
<div class="t" style="top:348px;font-size:13.75px;line-height:16px;color:#2e546f;font-weight:700;left:704.5px;">LSG</div>
<div style="left:694px;top:368px;width:49px;height:3px;background:#2c5674;"></div>
<div class="t" style="top:394px;font-size:13.75px;line-height:16px;color:#23282d;right:1262.2px;">Init Quantity</div>
<div style="left:658px;top:390px;width:108px;height:24px;background:#fff;box-sizing:border-box;border:1px solid #c5cad3"></div>
<div class="t" style="top:394px;font-size:13.75px;line-height:16px;color:#23282d;right:1157.8px;">90.000</div>
<div class="t" style="top:417px;font-size:13.75px;line-height:16px;color:#23282d;right:1262.2px;">End Quantity</div>
<div style="left:658px;top:413px;width:108px;height:23px;background:#f1f2f5;box-sizing:border-box;border:1px solid #c5cad3"></div>
<div class="t" style="top:417px;font-size:13.75px;line-height:16px;color:#23282d;right:1157.8px;">84.327</div>
<div class="t" style="top:394px;font-size:13.75px;line-height:16px;color:#23282d;right:1081.8px;">Init Price</div>
<div style="left:838px;top:390px;width:108px;height:24px;background:#fff;box-sizing:border-box;border:1px solid #c5cad3"></div>
<div class="t" style="top:394px;font-size:13.75px;line-height:16px;color:#23282d;right:977.4px;">0.00</div>
<div class="t" style="top:417px;font-size:13.75px;line-height:16px;color:#23282d;right:1081.8px;">End Price</div>
<div style="left:838px;top:413px;width:108px;height:23px;background:#f1f2f5;box-sizing:border-box;border:1px solid #c5cad3"></div>
<div class="t" style="top:417px;font-size:13.75px;line-height:16px;color:#23282d;right:977.4px;">0.00</div>
<div class="t" style="top:394px;font-size:13.75px;line-height:16px;color:#23282d;left:966.4px;">Calc Method</div>
<div style="left:1048px;top:390px;width:123px;height:24px;background:#fff;box-sizing:border-box;border:1px solid #c5cad3"></div>
<div class="t" style="top:394px;font-size:13.75px;line-height:16px;color:#23282d;left:1056.6px;">FIFO</div>
<div style="left:964px;top:419px;width:16px;height:16px;box-sizing:border-box;border:1px solid #767676;border-radius:3px;background:#fff"></div>
<div class="t" style="top:419px;font-size:13.75px;line-height:16px;color:#23282d;left:984px;">Transfer Received When Fixing</div>
<div class="t" style="top:394px;font-size:13.75px;line-height:16px;color:#23282d;left:1204.3px;">Total Cons</div>
<div style="left:1273px;top:390px;width:108px;height:24px;background:#f1f2f5;box-sizing:border-box;border:1px solid #c5cad3"></div>
<div class="t" style="top:394px;font-size:13.75px;line-height:16px;color:#23282d;right:543.3px;">73.781</div>
<div style="left:553px;top:458px;width:866px;height:338px;box-sizing:border-box;border:1px solid #c9ccd8;background:#fff"></div>
<div style="left:554px;top:459px;width:840px;height:21px;background:#e8e9f0;box-sizing:border-box;border-bottom:1px solid #c9ccd8;"></div>
<div style="left:734px;top:459px;width:1px;height:20px;background:#c9ccd8;"></div>
<div style="left:764px;top:459px;width:1px;height:20px;background:#c9ccd8;"></div>
<div style="left:869px;top:459px;width:1px;height:20px;background:#c9ccd8;"></div>
<div style="left:974px;top:459px;width:1px;height:20px;background:#c9ccd8;"></div>
<div style="left:1079px;top:459px;width:1px;height:20px;background:#c9ccd8;"></div>
<div style="left:1184px;top:459px;width:1px;height:20px;background:#c9ccd8;"></div>
<div style="left:1289px;top:459px;width:1px;height:20px;background:#c9ccd8;"></div>
<div class="t" style="top:461px;font-size:13.75px;line-height:16px;color:#4f555d;left:561px;">Port Name</div>
<div class="t" style="top:461px;font-size:13.75px;line-height:16px;color:#4f555d;left:739.5px;">F</div>
<div class="t" style="top:461px;font-size:13.75px;line-height:16px;color:#4f555d;right:1055.4px;">Sea Cons</div>
<div class="t" style="top:461px;font-size:13.75px;line-height:16px;color:#4f555d;right:950.3px;">ROB Arr</div>
<div class="t" style="top:461px;font-size:13.75px;line-height:16px;color:#4f555d;right:845.4px;">Port Cons</div>
<div class="t" style="top:461px;font-size:13.75px;line-height:16px;color:#4f555d;right:740.2px;">Receive</div>
<div class="t" style="top:461px;font-size:13.75px;line-height:16px;color:#4f555d;right:635.3px;">Price</div>
<div class="t" style="top:461px;font-size:13.75px;line-height:16px;color:#4f555d;right:530px;">ROB Dpt</div>
<div style="left:554px;top:503px;width:840px;height:19px;background:#e9eef2;"></div>
<div class="t" style="top:485px;font-size:13.75px;line-height:16px;color:#23282d;left:559.2px;">AABENRAA</div>
<div class="t" style="top:485px;font-size:13.75px;line-height:16px;color:#23282d;left:738.9px;">C</div>
<div class="t" style="top:485px;font-size:13.75px;line-height:16px;color:#23282d;right:1054px;">0.000</div>
<div class="t" style="top:485px;font-size:13.75px;line-height:16px;color:#23282d;right:949px;">0.000</div>
<div class="t" style="top:485px;font-size:13.75px;line-height:16px;color:#23282d;right:844.2px;">0.00</div>
<div class="t" style="top:485px;font-size:13.75px;line-height:16px;color:#23282d;right:529.1px;">90.000</div>
<div class="t" style="top:508px;font-size:13.75px;line-height:16px;color:#23282d;left:559.2px;">ENGLISH CHANNEL</div>
<div class="t" style="top:508px;font-size:13.75px;line-height:16px;color:#23282d;left:738.9px;">P</div>
<div class="t" style="top:508px;font-size:13.75px;line-height:16px;color:#23282d;right:1054px;">0.000</div>
<div class="t" style="top:508px;font-size:13.75px;line-height:16px;color:#23282d;right:949px;">0.000</div>
<div class="t" style="top:508px;font-size:13.75px;line-height:16px;color:#23282d;right:844.2px;">0.00</div>
<div class="t" style="top:508px;font-size:13.75px;line-height:16px;color:#23282d;right:529.1px;">0.000</div>
<div class="t" style="top:530px;font-size:13.75px;line-height:16px;color:#23282d;left:559.2px;">MOROCCO (COUNTRY)</div>
<div class="t" style="top:530px;font-size:13.75px;line-height:16px;color:#23282d;right:1054px;">5.673</div>
<div class="t" style="top:530px;font-size:13.75px;line-height:16px;color:#23282d;right:949px;">84.327</div>
<div class="t" style="top:530px;font-size:13.75px;line-height:16px;color:#23282d;right:844.2px;">0.00</div>
<div class="t" style="top:530px;font-size:13.75px;line-height:16px;color:#23282d;right:529.1px;">84.327</div>
<div class="t" style="top:799px;font-size:13.75px;line-height:16px;color:#23282d;right:1157px;">Totals</div>
<div style="left:763px;top:795px;width:108px;height:24px;background:#f1f2f5;box-sizing:border-box;border:1px solid #c5cad3"></div>
<div class="t" style="top:799px;font-size:13.75px;line-height:16px;color:#23282d;right:1053.3px;">73.781</div>
<div style="left:973px;top:795px;width:107px;height:24px;background:#f1f2f5;box-sizing:border-box;border:1px solid #c5cad3"></div>
<div class="t" style="top:799px;font-size:13.75px;line-height:16px;color:#23282d;right:843px;">0.000</div>
<div style="left:1079px;top:795px;width:107px;height:24px;background:#f1f2f5;box-sizing:border-box;border:1px solid #c5cad3"></div>
<div class="t" style="top:799px;font-size:13.75px;line-height:16px;color:#23282d;right:737.7px;">0.000</div>
<div class="t" style="top:822px;font-size:13.75px;line-height:16px;color:#23282d;left:1197.8px;">Fuel Zone Set</div>
<div style="left:1288px;top:818px;width:123px;height:23px;background:#fff;box-sizing:border-box;border:1px solid #c5cad3"></div>
<div class="t" style="top:822px;font-size:13.75px;line-height:16px;color:#23282d;left:1296.3px;">Global Default</div>
<div style="left:1194px;top:798px;width:190px;height:27px;background:#fff;"></div>
<div style="left:1204px;top:801px;width:16px;height:16px;border-radius:3px;background:#0d75f8"></div>
<svg style="left:1204px;top:801px;" width="16" height="16" viewBox="0 0 16 16"><path d="M3.500 8.300l3.200 3.200 5.800-6.500" stroke="#fff" stroke-width="2.200" fill="none"/></svg>
<div class="t" style="top:801px;font-size:13.75px;line-height:16px;color:#23282d;left:1224.3px;">Disable Backup Fuels</div>
<div style="left:559px;top:846px;width:16px;height:16px;box-sizing:border-box;border:1px solid #767676;border-radius:3px;background:#fff"></div>
<div class="t" style="top:846px;font-size:13.75px;line-height:16px;color:#23282d;left:578.7px;">Optimize Liftings for Cargo:</div>
<div style="left:763px;top:840px;width:153px;height:24px;background:#f1f2f5;box-sizing:border-box;border:1px solid #c5cad3"></div>
<div style="left:559px;top:869px;width:16px;height:16px;box-sizing:border-box;border:1px solid #767676;border-radius:3px;background:#fff"></div>
<div class="t" style="top:869px;font-size:13.75px;line-height:16px;color:#23282d;left:578.7px;">Use Scrubber</div>
<div style="left:555px;top:382px;width:217px;height:30px;box-sizing:border-box;border:3px solid #f63c3c;filter:drop-shadow(1px 2.500px 2px rgba(0,0,0,.42))"></div>
<div style="left:532px;top:522px;width:882px;height:33px;box-sizing:border-box;border:3px solid #f63c3c;filter:drop-shadow(1px 2.500px 2px rgba(0,0,0,.42))"></div>
<div style="left:1190px;top:781px;width:198px;height:46px;box-sizing:border-box;border:3px solid #f63c3c;filter:drop-shadow(1px 2.500px 2px rgba(0,0,0,.42))"></div>
<div style="left:1894px;top:0px;width:21px;height:991px;background:#f1f1f1;"></div>
<div style="left:0px;top:970px;width:1915px;height:21px;background:#f1f1f1;"></div>
<div style="left:0px;top:970px;width:1894px;height:1px;background:#fdfdfd;"></div>
<div style="left:1895px;top:21px;width:19px;height:833px;background:#c9c9c9;"></div>
<div style="left:22px;top:971px;width:1826px;height:19px;background:#cdcdcd;"></div>
<svg style="left:1898px;top:6px;" width="13" height="9" viewBox="0 0 13 9"><path d="M1.800 7.500l4.700-4.700 4.700 4.700" stroke="#505050" stroke-width="2" fill="none"/></svg>
<svg style="left:1898px;top:955px;" width="13" height="9" viewBox="0 0 13 9"><path d="M1.800 1.800l4.700 4.700 4.700-4.700" stroke="#505050" stroke-width="2" fill="none"/></svg>
<svg style="left:4px;top:974px;" width="9" height="13" viewBox="0 0 9 13"><path d="M7.200 1.800l-4.700 4.700 4.700 4.700" stroke="#505050" stroke-width="2" fill="none"/></svg>
<svg style="left:1879px;top:974px;" width="9" height="13" viewBox="0 0 9 13"><path d="M1.800 1.800l4.700 4.700-4.700 4.700" stroke="#505050" stroke-width="2" fill="none"/></svg>
<svg style="left:1901px;top:978px;" width="11" height="11" viewBox="0 0 11 11"><g fill="#c6c6c6"><rect x="8" y="0" width="3" height="3"/><rect x="4" y="4" width="3" height="3"/><rect x="8" y="4" width="3" height="3"/><rect x="0" y="8" width="3" height="3"/><rect x="4" y="8" width="3" height="3"/><rect x="8" y="8" width="3" height="3"/></g></svg>
</body></html>
